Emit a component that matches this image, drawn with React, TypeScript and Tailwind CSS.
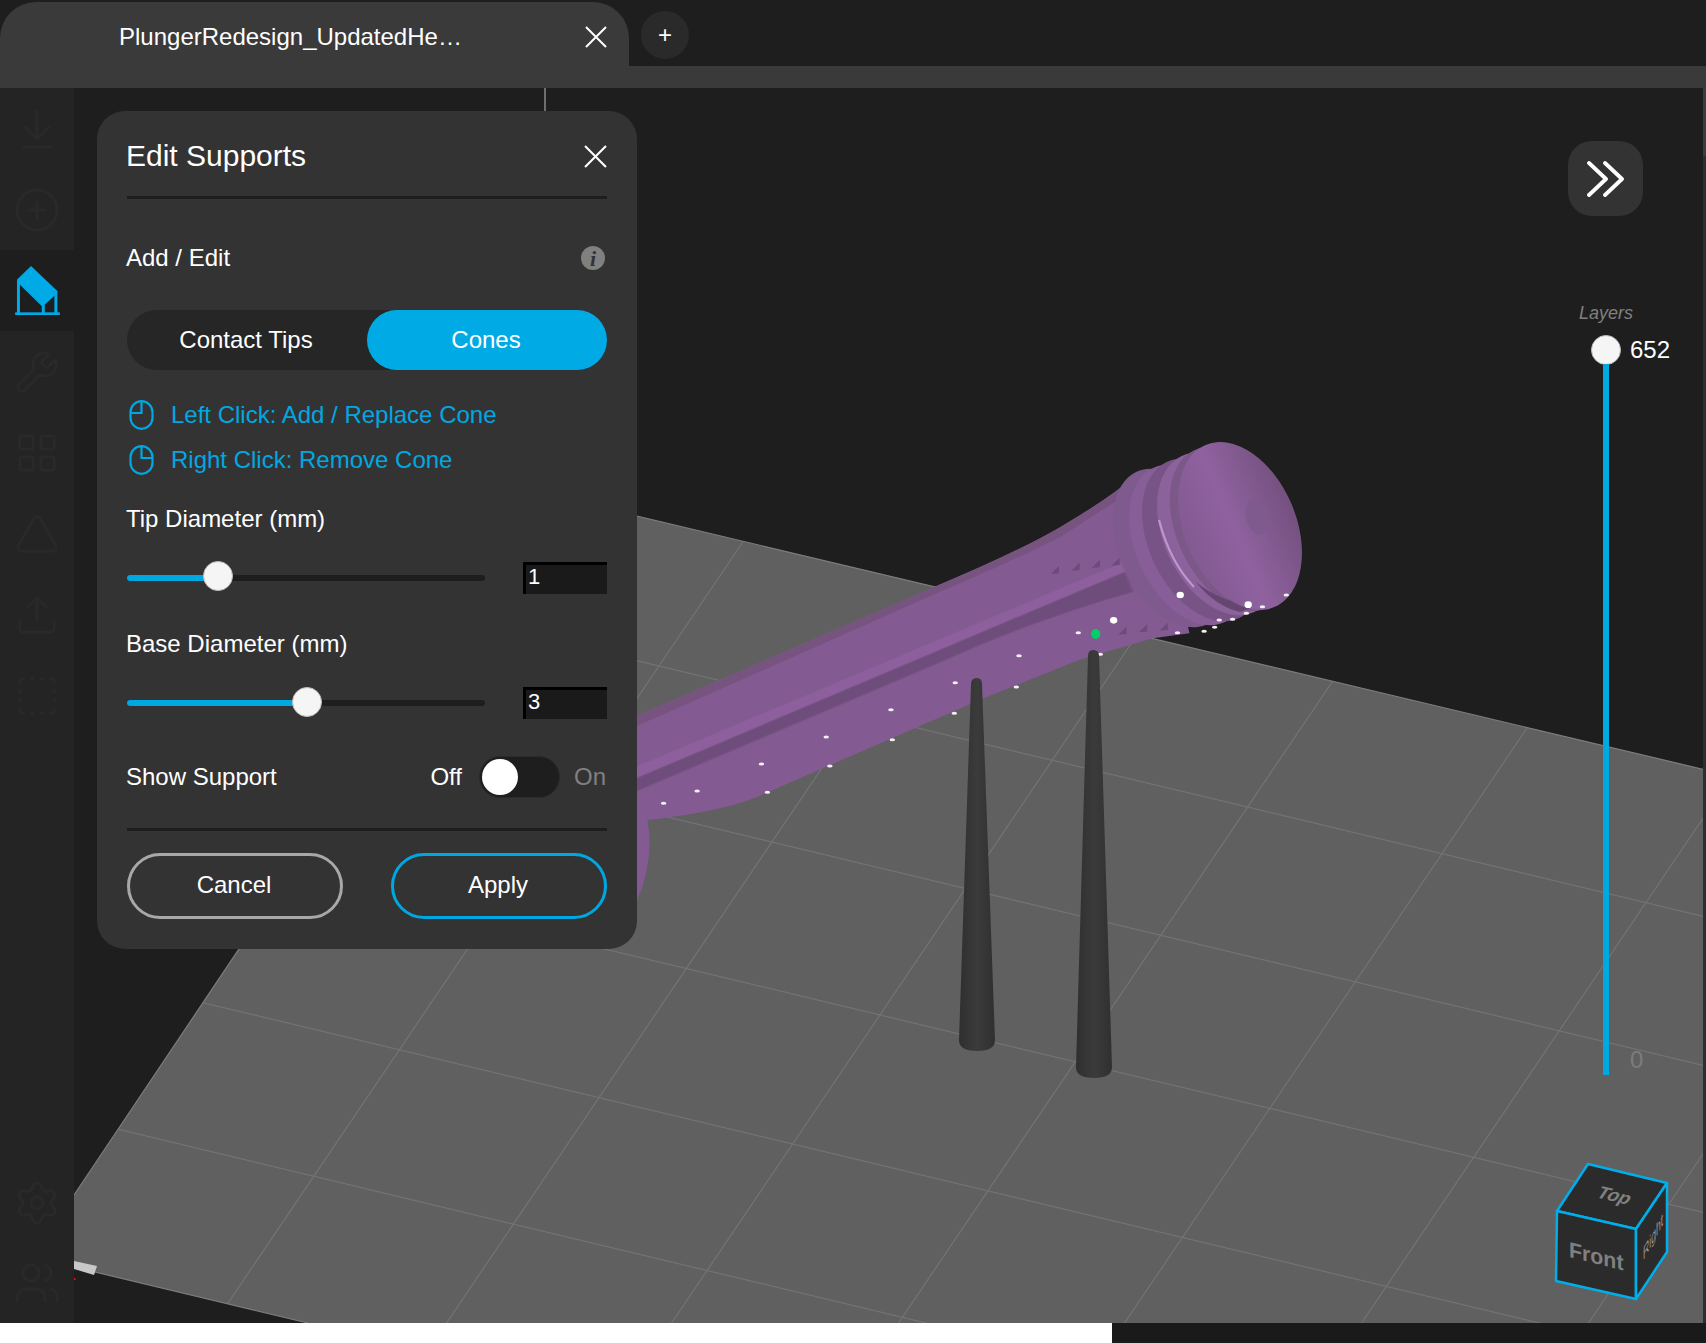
import { ArrowDownToLine, CirclePlus, Wrench, LayoutGrid, Triangle, Upload, SquareDashed, Settings, Users } from 'lucide-react';

const floor = '544,494 1706,770 1706,1323 308,1323 74,1267 74,1195';
const bodyPath =
  'M-120 980 L100 850 L690 497 Q860 400 960 320 Q1060 240 1120 170 L1180 250 L1240 640 L1160 655 L1000 720 L800 830 L300 1130 Q220 1175 60 1200 Q75 1320 38 1440 L-120 1500 Z';

// grid lines of the build plate, by where they cross x=1000 and y=980
const acrossLines = [748, 897, 1044, 1194, 1341];
const alongLines = [448, 680, 905, 1132, 1358, 1595, 1822];

const dots = [
  [95, 1150], [168, 1113], [308, 1032], [449, 951], [590, 869], [730, 788], [869, 707], [998, 638],
  [321, 1117], [457, 1038], [593, 959], [728, 880], [863, 801], [1046, 703], [1305, 600], [1334, 598],
  [1399, 560], [1451, 525], [1364, 580], [1295, 622], [1272, 634], [1214, 638],
];
const bigDots = [[1075, 601], [1220, 525], [1368, 554]];
const teeth = [[948, 450], [993, 440], [1037, 432], [1080, 425], [1095, 632], [1140, 625], [1185, 620]];

function Scene() {
  return (
    <svg className="absolute inset-0 w-full h-full" viewBox="74 88 1629 1235">
      <defs>
        <clipPath id="plate"><polygon points={floor} /></clipPath>
        <clipPath id="body"><path d={bodyPath} /></clipPath>
        <filter id="soft" x="-10%" y="-10%" width="120%" height="120%">
          <feGaussianBlur stdDeviation="4 2" />
        </filter>
        <linearGradient id="cone" x1="0" x2="1" y1="0" y2="0">
          <stop offset="0" stopColor="#2f2f2f" />
          <stop offset="0.5" stopColor="#3b3b3b" />
          <stop offset="1" stopColor="#303030" />
        </linearGradient>
        <linearGradient id="cap" x1="0" x2="1" y1="0" y2="0">
          <stop offset="0" stopColor="#835a92" />
          <stop offset="0.45" stopColor="#8f629f" />
          <stop offset="1" stopColor="#74517f" />
        </linearGradient>
      </defs>

      {/* build plate */}
      <polygon points={floor} fill="#606060" />
      <g clipPath="url(#plate)" stroke="#737373" strokeWidth="1.2">
        {acrossLines.map((y) => (
          <line key={y} x1={0} y1={y - 240} x2={1706} y2={y + 169} />
        ))}
        {alongLines.map((x) => (
          <line key={x} x1={x + 330} y1={490} x2={x - 272} y2={1380} />
        ))}
      </g>
      <polyline points="544,494 1706,770" fill="none" stroke="#7d7d7d" strokeWidth="1.2" />
      <polyline points="74,1195 544,494" fill="none" stroke="#7d7d7d" strokeWidth="1.2" />
      <polyline points="74,1267 308,1323" fill="none" stroke="#7d7d7d" strokeWidth="1.2" />
      <polygon points="74,1261 97,1266 94,1275 74,1269" fill="#c8c8c8" />
      <rect x="74" y="1278" width="1.5" height="2" fill="#e01010" />
      <line x1="545" y1="88" x2="545" y2="111" stroke="#8a8a8a" strokeWidth="1.5" />

      {/* plunger body, drawn in crop units */}
      <g transform="translate(620 420) scale(0.4592 0.3333)">
        <path d={bodyPath} fill="#835a91" />
        <g clipPath="url(#body)">
          <path d="M-120 980 L100 850 L690 497 Q860 400 960 320 L1120 170 L1140 190 L960 350 Q860 420 690 520 L100 880 L-120 1010 Z" fill="#77547f" />
          <g filter="url(#soft)">
            <path d="M-120 1130 L1090 430 L1100 455 L-120 1165 Z" fill="#8d619d" />
            <path d="M-120 1165 L1100 455 L1118 515 Q900 600 700 725 L-120 1205 Z" fill="#6e4e7b" />
          </g>
        </g>
      </g>

      {/* plunger head */}
      <ellipse cx="1172" cy="548" rx="52" ry="84" transform="rotate(-25 1172 548)" fill="#7f5a8e" />
      <ellipse cx="1189" cy="545" rx="53" ry="85" transform="rotate(-25 1189 545)" fill="#875e97" />
      <ellipse cx="1203" cy="540" rx="54" ry="86" transform="rotate(-25 1203 540)" fill="#785486" />
      <ellipse cx="1218" cy="534" rx="54" ry="86" transform="rotate(-25 1218 534)" fill="#8b629b" />
      <path d="M1159 520 Q1170 562 1194 587" fill="none" stroke="#c096d0" strokeWidth="2.2" />
      <ellipse cx="1231" cy="529" rx="54" ry="87" transform="rotate(-25 1231 529)" fill="#7c5889" />
      <path d="M1196 582 Q1215 606 1240 612 L1262 604 Q1225 606 1196 582 Z" fill="#644670" />
      <ellipse cx="1240" cy="526" rx="56" ry="88" transform="rotate(-23 1240 526)" fill="url(#cap)" />
      <ellipse cx="1257" cy="517" rx="11" ry="18" transform="rotate(-15 1257 517)" fill="#7f5a8e" />

      {/* marks on the body */}
      <g transform="translate(620 420) scale(0.4592 0.3333)">
        {teeth.map(([x, y]) => (
          <polygon key={x} points={`${x - 10},${y + 12} ${x + 8},${y - 12} ${x + 8},${y + 10}`} fill="#6c4c79" />
        ))}
        {dots.map(([x, y]) => (
          <ellipse key={x} cx={x} cy={y} rx="6" ry="4.5" fill="#f4f0f6" />
        ))}
        {bigDots.map(([x, y]) => (
          <ellipse key={x} cx={x} cy={y} rx="8" ry="10" fill="#ffffff" />
        ))}
        <ellipse cx="1036" cy="642" rx="10" ry="15" fill="#00cf63" />
      </g>

      {/* support cones */}
      <path d="M971 684 Q971 678 977 678 Q982 678 982 684 L995 1040 Q995 1051 977 1051 Q959 1051 959 1040 Z" fill="url(#cone)" />
      <path d="M1088 656 Q1088 650 1093 650 Q1099 650 1099 656 L1112 1067 Q1112 1078 1094 1078 Q1076 1078 1076 1067 Z" fill="url(#cone)" />
    </svg>
  );
}

function ViewCube() {
  return (
    <svg className="absolute left-[1406px] top-[1032px] w-[226px] h-[223px]" viewBox="0 0 226 223">
      <g fill="#2b2b2b" stroke="#00aeea" strokeWidth="2.5" strokeLinejoin="round">
        <polygon points="108,44 187,63 156,109 77,91" />
        <polygon points="77,91 156,109 156,179 76,161" />
        <polygon points="156,109 187,63 187,132 156,179" />
      </g>
      <text transform="matrix(0.97 0.23 -0.55 0.83 115 77)" fontSize="19" fontWeight="700" fill="#808080" fontFamily="Liberation Sans">Top</text>
      <text transform="matrix(0.97 0.24 0 1 89 137)" fontSize="22" fontWeight="700" fill="#808080" fontFamily="Liberation Sans">Front</text>
      <text transform="matrix(0.48 -0.88 0 1 163 141)" fontSize="18" fill="#969696" fontFamily="Liberation Sans">Right</text>
    </svg>
  );
}

function CloseIcon({ size }: { size: number }) {
  return (
    <svg width={size} height={size} viewBox="0 0 22 22" fill="none" stroke="#ffffff" strokeWidth="2">
      <path d="M1 1 L21 21 M21 1 L1 21" />
    </svg>
  );
}

function MouseIcon({ side }: { side: 'left' | 'right' }) {
  return (
    <svg width="25" height="30" viewBox="0 0 25 30" fill="none" stroke="#00a8e1" strokeWidth="2.2">
      <rect x="1.5" y="1.2" width="22" height="27.6" rx="11" />
      <path d={side === 'left' ? 'M12.5 1.2 V13 H1.5' : 'M12.5 1.2 V13 H23.5'} />
    </svg>
  );
}

function SliderRow({ value, fill, thumb }: { value: string; fill: string; thumb: string }) {
  return (
    <div className="mt-[29px] h-[32px] flex items-center justify-between">
      <div className="relative w-[358px] h-[6px] rounded-full bg-[#1e1e1e]">
        <div className={`h-full rounded-full bg-[#00a8e1] ${fill}`} />
        <div className={`absolute w-[30px] h-[30px] rounded-full bg-[#f5f5f5] border border-[#bdbdbd] ${thumb}`} />
      </div>
      <input
        readOnly
        value={value}
        className="w-[84px] h-[32px] bg-[#1a1a1a] border-t-[3px] border-l-[3px] border-black pl-[2px] pb-[5px] text-[22px] leading-none text-white outline-none"
      />
    </div>
  );
}

const sideTop = [ArrowDownToLine, CirclePlus];
const sideRest = [Wrench, LayoutGrid, Triangle, Upload, SquareDashed];
const sideBottom = [Settings, Users];

export default function App() {
  return (
    <div className="w-[1706px] h-[1343px] flex flex-col overflow-hidden bg-[#1e1e1e] text-white text-[24px] font-['Liberation_Sans',Arial,sans-serif]">
      {/* tabs */}
      <div className="h-[88px] flex shrink-0">
        <div className="w-[629px] mt-[2px] pl-[119px] pr-[22px] pb-[16px] rounded-t-[36px] bg-[#3a3a3a] flex items-center justify-between">
          <span>PlungerRedesign_UpdatedHe…</span>
          <CloseIcon size={22} />
        </div>
        <div className="flex-1 flex flex-col">
          <div className="h-[66px] pl-[12px] pt-[11px]">
            <div className="w-[48px] h-[48px] rounded-full bg-[#2a2a2a] flex items-center justify-center text-[24px] leading-none">+</div>
          </div>
          <div className="flex-1 bg-[#3a3a3a]" />
        </div>
      </div>

      <div className="flex-1 flex min-h-0">
        {/* tool rail */}
        <aside className="w-[74px] bg-[#242424] flex flex-col text-[#292929]">
          {sideTop.map((Icon, i) => (
            <div key={i} className="h-[81px] flex items-center justify-center"><Icon size={48} strokeWidth={1.5} /></div>
          ))}
          <div className="h-[81px] bg-[#1e1e1e] flex items-center justify-center">
            <svg width="45" height="49" viewBox="42 557 135 148">
              <path d="M90 557 L167 630 L168 640 L127 678 L122 678 L48 605 L48 598 Z" fill="#00aae6" />
              <path d="M52 600 V700 M165 632 V700 M127 675 V700" stroke="#00aae6" strokeWidth="9" fill="none" />
              <rect x="42" y="697" width="135" height="8" fill="#00aae6" />
            </svg>
          </div>
          {sideRest.map((Icon, i) => (
            <div key={i} className="h-[81px] flex items-center justify-center"><Icon size={46} strokeWidth={1.5} /></div>
          ))}
          <div className="mt-auto">
            {sideBottom.map((Icon, i) => (
              <div key={i} className="h-[80px] flex items-center justify-center"><Icon size={48} strokeWidth={1.5} /></div>
            ))}
          </div>
        </aside>

        {/* viewport */}
        <div className="relative flex-1 min-w-0">
          <Scene />

          <div className="absolute left-[23px] top-[23px] w-[540px] h-[838px] px-[30px] rounded-[28px] bg-[#333333] flex flex-col">
            <div className="h-[88px] pt-[4px] border-b-[3px] border-[#1e1e1e] flex items-center justify-between">
              <span className="text-[30px] -ml-px">Edit Supports</span>
              <span className="pt-[2px] flex"><CloseIcon size={23} /></span>
            </div>

            <div className="mt-[44px] h-[30px] flex items-center justify-between">
              <span className="-ml-px">Add / Edit</span>
              <span className="w-[24px] h-[24px] mr-[2px] rounded-full bg-[#808080] text-[#333333] text-[22px] font-bold italic font-['Liberation_Serif',serif] flex items-center justify-center">i</span>
            </div>

            <div className="mt-[37px] h-[60px] rounded-full bg-[#262626] flex">
              <div className="flex-1 pr-[2px] pb-[1px] flex items-center justify-center">Contact Tips</div>
              <div className="w-[240px] pr-[2px] pb-[1px] rounded-full bg-[#00abe5] flex items-center justify-center">Cones</div>
            </div>

            <div className="mt-[30px] h-[30px] flex items-center gap-[17px] text-[#00a8e1]">
              <span className="ml-[2px]"><MouseIcon side="left" /></span>
              <span className="pb-[1px]">Left Click: Add / Replace Cone</span>
            </div>
            <div className="mt-[15px] h-[30px] flex items-center gap-[17px] text-[#00a8e1]">
              <span className="ml-[2px]"><MouseIcon side="right" /></span>
              <span className="pb-[1px]">Right Click: Remove Cone</span>
            </div>

            <div className="mt-[30px] -ml-px h-[28px] leading-[28px]">Tip Diameter (mm)</div>
            <SliderRow value="1" fill="w-[91px]" thumb="left-[76px] top-[-14px]" />

            <div className="mt-[36px] -ml-px h-[28px] leading-[28px]">Base Diameter (mm)</div>
            <SliderRow value="3" fill="w-[180px]" thumb="left-[165px] top-[-13px]" />

            <div className="mt-[37px] h-[42px] flex items-center justify-between">
              <span className="-ml-px">Show Support</span>
              <div className="flex items-center">
                <span>Off</span>
                <div className="ml-[17px] w-[81px] h-[42px] p-[2px] rounded-full bg-[#1e1e1e] border border-[#2a2a2a]">
                  <div className="w-[36px] h-[36px] rounded-full bg-white" />
                </div>
                <span className="ml-[14px] mr-[1px] text-[#808080]">On</span>
              </div>
            </div>

            <div className="mt-[30px] h-[3px] bg-[#1e1e1e]" />

            <div className="mt-[22px] flex justify-between">
              <button className="w-[216px] h-[66px] pr-[2px] pb-[2px] rounded-full border-[3px] border-[#a8a8a8]">Cancel</button>
              <button className="w-[216px] h-[66px] pr-[2px] pb-[2px] rounded-full border-[3px] border-[#00a8e1]">Apply</button>
            </div>
          </div>

          <button className="absolute left-[1494px] top-[53px] w-[75px] h-[75px] rounded-[24px] bg-[#333333] flex items-center justify-center">
            <svg width="38" height="36" viewBox="0 0 38 36" fill="none" stroke="#ffffff" strokeWidth="3.8" strokeLinecap="round" strokeLinejoin="round">
              <path d="M2 2 L19 18 L2 34 M18 2 L35 18 L18 34" />
            </svg>
          </button>

          <div className="absolute left-[1472px] top-[216px] w-[120px] flex flex-col items-center">
            <span className="text-[18px] leading-[18px] italic text-[#808080]">Layers</span>
            <div className="relative mt-[13px] w-[30px] h-[30px] rounded-full bg-[#f5f5f5] border border-[#bdbdbd]">
              <span className="absolute left-[38px] top-[-1px] leading-[30px]">652</span>
            </div>
            <div className="relative w-[6px] h-[711px] -mt-[1px] bg-[#00a8e1]">
              <span className="absolute left-[27px] bottom-[-3px] text-[#7c7c7c]">0</span>
            </div>
          </div>

          <ViewCube />
        </div>
        <div className="w-[3px] bg-[#2e2e2e] flex flex-col">
          <div className="h-[68px] bg-[#3c3c3c]" />
        </div>
      </div>

      <div className="h-[20px] flex shrink-0 bg-[#1a1a1a]">
        <div className="w-[1112px] bg-white" />
      </div>
    </div>
  );
}
